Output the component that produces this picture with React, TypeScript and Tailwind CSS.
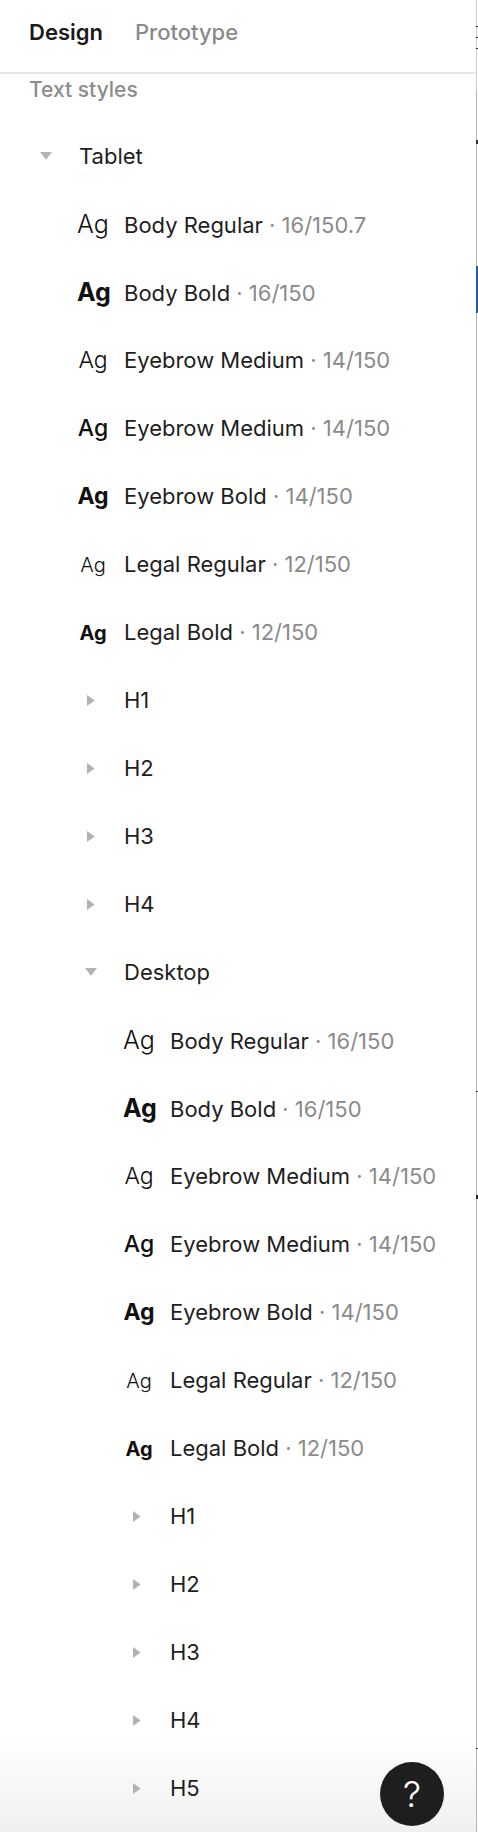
import React from 'react'

type StyleItem = {
  name: string
  value: string
  ag: string
}

type Row =
  | { kind: 'style'; depth: 1 | 2; item: StyleItem }
  | { kind: 'group'; depth: 0 | 1 | 2; label: string; open: boolean }

const tabletStyles: StyleItem[] = [
  { name: 'Body Regular', value: '16/150.7', ag: 'text-[25px] font-[350]' },
  { name: 'Body Bold', value: '16/150', ag: 'text-[25px] font-bold' },
  { name: 'Eyebrow Medium', value: '14/150', ag: 'text-[23px] font-[350]' },
  { name: 'Eyebrow Medium', value: '14/150', ag: 'text-[23px] font-medium' },
  { name: 'Eyebrow Bold', value: '14/150', ag: 'text-[23px] font-bold' },
  { name: 'Legal Regular', value: '12/150', ag: 'text-[20px] font-[350]' },
  { name: 'Legal Bold', value: '12/150', ag: 'text-[20px] font-bold' },
]

const desktopStyles: StyleItem[] = tabletStyles.map((s, i) =>
  i === 0 ? { ...s, value: '16/150' } : s
)

const rows: Row[] = [
  { kind: 'group', depth: 0, label: 'Tablet', open: true },
  ...tabletStyles.map((item) => ({ kind: 'style' as const, depth: 1 as const, item })),
  ...['H1', 'H2', 'H3', 'H4'].map((label) => ({ kind: 'group' as const, depth: 1 as const, label, open: false })),
  { kind: 'group', depth: 1, label: 'Desktop', open: true },
  ...desktopStyles.map((item) => ({ kind: 'style' as const, depth: 2 as const, item })),
  ...['H1', 'H2', 'H3', 'H4', 'H5'].map((label) => ({ kind: 'group' as const, depth: 2 as const, label, open: false })),
]

// left padding per depth, written out so tailwind picks them up
const caretPad = ['pl-[34px]', 'pl-[79px]', 'pl-[125px]']
const agPad = ['pl-[32px]', 'pl-[77px]', 'pl-[123px]']

function Caret({ open }: { open: boolean }) {
  return open ? (
    <svg width="12" height="8" viewBox="0 0 12 8" className="fill-[#b3b3b3]">
      <polygon points="0,0 12,0 6,7.7" />
    </svg>
  ) : (
    <svg width="8" height="11" viewBox="0 0 8 11" className="fill-[#b3b3b3]">
      <polygon points="0,0 7.7,5.5 0,11" />
    </svg>
  )
}

function TreeRow({ row }: { row: Row }) {
  if (row.kind === 'group') {
    return (
      <div className={`flex h-[68px] items-center ${caretPad[row.depth]}`}>
        <div className="flex w-[24px] justify-center">
          <Caret open={row.open} />
        </div>
        <span className="ml-[21px] text-[22px] leading-[32px] text-[#1e1e1e]">{row.label}</span>
      </div>
    )
  }

  const { item } = row
  return (
    <div className={`flex h-[68px] items-center ${agPad[row.depth]}`}>
      <div className="flex items-baseline">
        <span className={`w-[32px] text-center leading-[32px] text-[#111] ${item.ag}`}>Ag</span>
        <span className="ml-[15px] whitespace-nowrap text-[22px] leading-[32px] text-[#1e1e1e]">
          {item.name}
          <span className="text-[#8a8a8a]"> · {item.value}</span>
        </span>
      </div>
    </div>
  )
}

function EdgeStrip() {
  return (
    <div className="relative w-[2px] shrink-0 bg-white">
      <div className="absolute left-0 top-0 h-full w-px bg-[#b5b5b5]" />
      <div className="absolute left-0 top-0 h-[90px] w-px bg-[#cfcfcf]" />
      <div className="absolute left-0 top-[26px] h-px w-[2px] bg-[#333]" />
      <div className="absolute left-0 top-[37px] h-px w-[2px] bg-[#333]" />
      <div className="absolute left-0 top-[48px] h-px w-[2px] bg-[#333]" />
      <div className="absolute left-0 top-[140px] h-[4px] w-[2px] bg-[#333]" />
      <div className="absolute left-0 top-[266px] h-[47px] w-[2px] bg-[#1d5fae]" />
      <div className="absolute left-0 top-[1091px] h-px w-[2px] bg-[#333]" />
      <div className="absolute left-0 top-[1195px] h-[4px] w-[2px] bg-[#222]" />
      <div className="absolute left-0 top-[1748px] h-px w-[2px] bg-[#333]" />
    </div>
  )
}

export default function App() {
  return (
    <div className="flex h-[1832px] w-[478px] overflow-hidden bg-white font-['Inter','Liberation_Sans',sans-serif] antialiased">
      <div className="relative w-[476px] shrink-0">
        {/* bottom fade, sits behind the list */}
        <div className="pointer-events-none absolute bottom-0 left-0 h-[96px] w-full bg-linear-to-b from-white to-[#f0f0f0]" />

        <div className="relative">
          {/* tabs */}
          <div className="flex h-[74px] items-center gap-[32px] border-b-2 border-[#e6e6e6] pb-[8px] pl-[29px]">
            <span className="text-[22px] font-semibold leading-[32px] text-[#1a1a1a]">Design</span>
            <span className="text-[22px] font-medium leading-[32px] text-[#8a8a8a]">Prototype</span>
          </div>

          <div className="h-[48px] pl-[29px]">
            <span className="text-[21px] font-medium leading-[32px] text-[#8c8c8c]">Text styles</span>
          </div>

          <div className="flex flex-col">
            {rows.map((row, i) => (
              <TreeRow key={i} row={row} />
            ))}
          </div>
        </div>

        <button className="absolute bottom-[6px] right-[32px] flex h-[64px] w-[64px] items-center justify-center rounded-full bg-[#1e1e1e]">
          <span className="text-[36px] font-light leading-none text-white">?</span>
        </button>
      </div>
      <EdgeStrip />
    </div>
  )
}
